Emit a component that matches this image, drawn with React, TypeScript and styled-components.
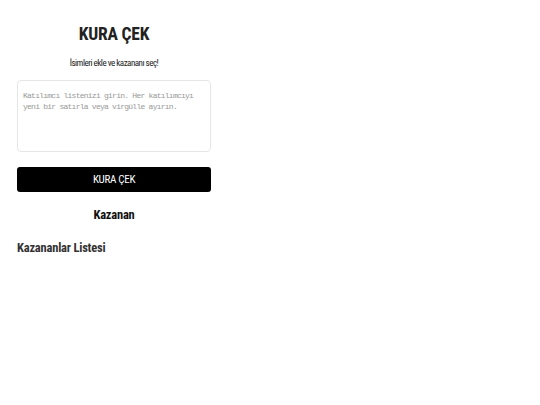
import React from "react";
import styled, { createGlobalStyle } from "styled-components";

const GlobalStyle = createGlobalStyle`
  html, body {
    margin: 0;
    padding: 0;
    background: #ffffff;
  }
  body {
    font-family: "Roboto Condensed", "Liberation Sans", Arial, sans-serif;
    color: #111;
  }
`;

const Page = styled.div`
  width: 194px;
  padding: 20px 0 0 17px;
  display: flex;
  flex-direction: column;
`;

const Title = styled.h1`
  margin: 2px 0 0;
  text-align: center;
  font-size: 17.5px;
  font-weight: bold;
  letter-spacing: -0.2px;
  line-height: 24px;
  color: #222;
`;

const Subtitle = styled.p`
  margin: 11px 0 0;
  text-align: center;
  font-size: 9px;
  letter-spacing: -0.5px;
  line-height: 12px;
  color: #222;
`;

const Entry = styled.textarea`
  margin-top: 11px;
  box-sizing: border-box;
  width: 194px;
  height: 72px;
  padding: 9px 5px;
  border: 1px solid #e6e6e6;
  border-radius: 4px;
  resize: none;
  font-family: "Liberation Mono", "DejaVu Sans Mono", monospace;
  font-size: 8px;
  letter-spacing: -0.75px;
  line-height: 11px;
  color: #333;
  outline: none;

  &::placeholder {
    color: #999;
  }
`;

const DrawButton = styled.button`
  margin-top: 15px;
  height: 25px;
  border: none;
  border-radius: 3px;
  background: #000;
  color: #fff;
  font-family: "Roboto Condensed", "Liberation Sans", Arial, sans-serif;
  font-size: 11px;
  letter-spacing: -0.3px;
  cursor: pointer;
`;

const WinnerHeading = styled.h2`
  margin: 15px 0 0;
  text-align: center;
  font-size: 12.5px;
  letter-spacing: -0.2px;
  line-height: 16px;
  font-weight: bold;
  color: #111;
`;

const ListHeading = styled.h2`
  margin: 17px 0 0;
  text-align: left;
  font-size: 12.5px;
  letter-spacing: -0.2px;
  line-height: 16px;
  font-weight: bold;
  color: #333;
`;

export default function App() {
  return (
    <>
      <GlobalStyle />
      <Page>
        <Title>KURA ÇEK</Title>
        <Subtitle>İsimleri ekle ve kazananı seç!</Subtitle>
        <Entry placeholder="Katılımcı listenizi girin. Her katılımcıyı yeni bir satırla veya virgülle ayırın." />
        <DrawButton>KURA ÇEK</DrawButton>
        <WinnerHeading>Kazanan</WinnerHeading>
        <ListHeading>Kazananlar Listesi</ListHeading>
      </Page>
    </>
  );
}
